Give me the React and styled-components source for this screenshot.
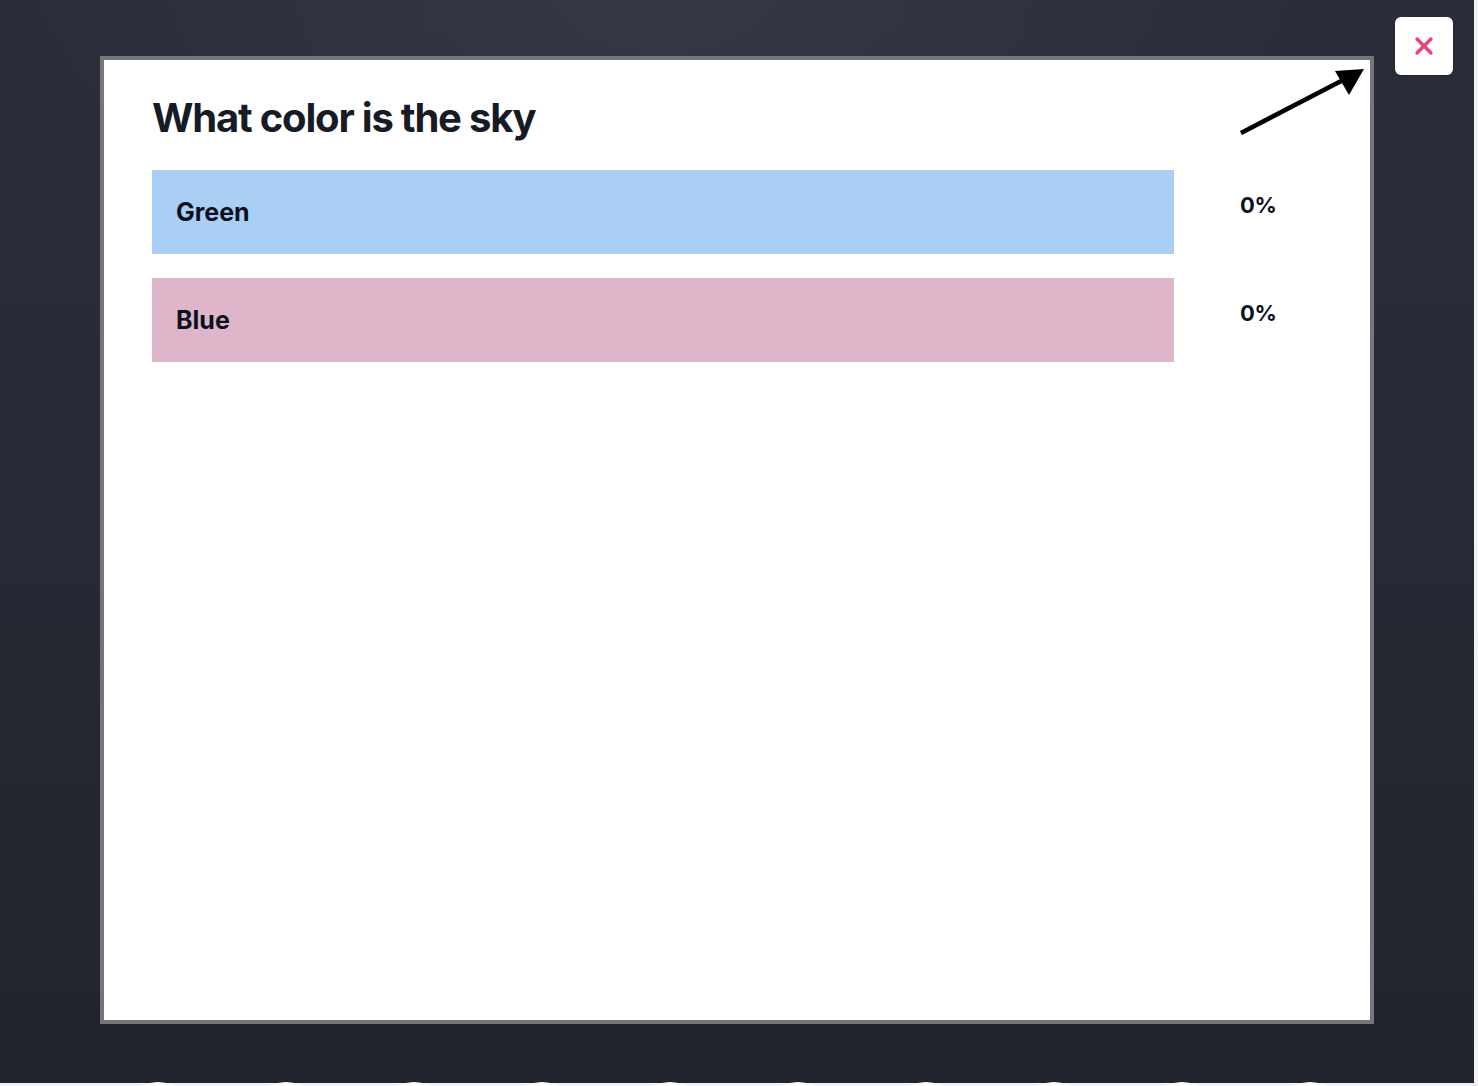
import React from "react";
import styled, { createGlobalStyle } from "styled-components";

const Global = createGlobalStyle`
  html, body { margin: 0; padding: 0; }
  body {
    background: #f0f2f5;
    overflow: hidden;
    font-family: Inter, "Noto Sans", Arial, sans-serif;
    width: 1478px;
    height: 1086px;
  }
`;

const Page = styled.div`
  display: flex;
  flex-direction: column;
  width: 1478px;
  height: 1086px;
  overflow: hidden;
`;

const Backdrop = styled.div`
  position: relative;
  flex: none;
  width: 1474px;
  height: 1083px;
  box-sizing: border-box;
  padding: 56px 0 0 100px;
  background:
    radial-gradient(ellipse 900px 500px at 45% 0%, rgba(62, 66, 78, 0.55), rgba(62, 66, 78, 0) 70%),
    linear-gradient(180deg, #2a2e38 0%, #262a34 50%, #20242c 100%);
`;

const Modal = styled.div`
  position: relative;
  box-sizing: border-box;
  width: 1274px;
  height: 968px;
  border: 4px solid #74767c;
  background: #ffffff;
  padding: 36px 48px 0 48px;
`;

const Title = styled.h1`
  margin: 0 0 30px 0;
  font-size: 40px;
  line-height: 44px;
  font-weight: 700;
  letter-spacing: -1.2px;
  color: #161b26;
`;

const Options = styled.div`
  display: flex;
  flex-direction: column;
  gap: 24px;
`;

const Row = styled.div`
  display: grid;
  grid-template-columns: 1022px auto;
  column-gap: 66px;
  align-items: start;
`;

const Bar = styled.div`
  height: 84px;
  background: ${(p) => p.$color};
  display: flex;
  align-items: center;
  padding-left: 24px;
  box-sizing: border-box;
  font-size: 25px;
  font-weight: 700;
  letter-spacing: 0;
  color: #0c1020;
`;

const Percent = styled.div`
  padding-top: 20px;
  font-size: 22px;
  line-height: 30px;
  font-weight: 700;
  letter-spacing: -0.3px;
  color: #0c1020;
`;

const Arrow = styled.svg`
  position: absolute;
  top: 2px;
  right: 1px;
`;

const CloseButton = styled.button`
  position: absolute;
  top: 17px;
  left: 1395px;
  width: 58px;
  height: 58px;
  border: none;
  border-radius: 6px;
  background: #ffffff;
  display: flex;
  align-items: center;
  justify-content: center;
  padding: 0;
  cursor: pointer;
  box-shadow: 0 1px 3px rgba(0,0,0,0.2);
`;

const BottomRow = styled.div`
  display: flex;
  gap: 58px;
  padding-left: 123px;
  height: 3px;
  overflow: visible;
  position: relative;
`;

const Bump = styled.div`
  flex: none;
  width: 70px;
  height: 70px;
  border-radius: 50%;
  background: #ffffff;
  margin-top: -1px;
`;

const options = [
  { label: "Green", color: "#a9cff5", pct: 0 },
  { label: "Blue", color: "#dfb5c9", pct: 0 },
];

export default function App() {
  return (
    <>
      <Global />
      <Page>
        <Backdrop>
          <Modal>
            <Title>What color is the sky</Title>
            <Options>
              {options.map((o) => (
                <Row key={o.label}>
                  <Bar $color={o.color}>{o.label}</Bar>
                  <Percent>{o.pct}%</Percent>
                </Row>
              ))}
            </Options>
            <Arrow width="140" height="80" viewBox="1228 62 140 80">
              <line x1="1240" y1="133" x2="1346" y2="78" stroke="#000" strokeWidth="4.6" />
              <polygon points="1363,69 1334,71 1348,95" fill="#000" />
            </Arrow>
          </Modal>
          <CloseButton aria-label="Close">
            <svg width="20" height="20" viewBox="0 0 20 20">
              <path d="M3 3 L17 17 M17 3 L3 17" stroke="#e8436e" strokeWidth="3.4" strokeLinecap="round" />
            </svg>
          </CloseButton>
        </Backdrop>
        <BottomRow>
          {Array.from({ length: 10 }).map((_, i) => (
            <Bump key={i} />
          ))}
        </BottomRow>
      </Page>
    </>
  );
}
